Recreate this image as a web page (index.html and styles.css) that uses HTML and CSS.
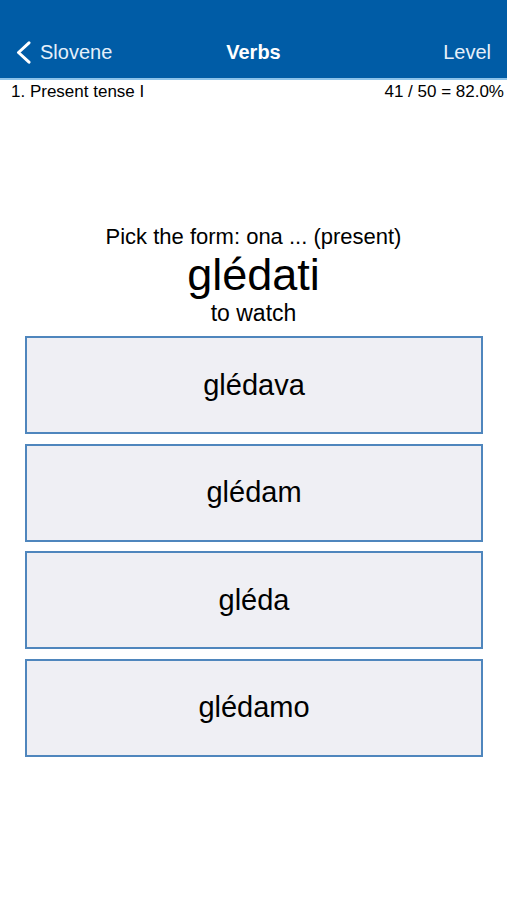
FILE: index.html
```html
<!DOCTYPE html>
<html>
<head>
<meta charset="utf-8">
<link rel="stylesheet" href="styles.css">
</head>
<body>
<header class="nav">
  <div class="nav-row">
    <div class="back">
      <svg class="chev" width="15" height="23" viewBox="0 0 15 23"><path d="M13 1.8 L2.5 11.5 L13 21.2" fill="none" stroke="#fff" stroke-width="3" stroke-linecap="round" stroke-linejoin="round"/></svg>
      <span>Slovene</span>
    </div>
    <div class="title">Verbs</div>
    <div class="level">Level</div>
  </div>
</header>
<div class="sub">
  <span>1. Present tense I</span>
  <span>41 / 50 = 82.0%</span>
</div>
<main class="quiz">
  <div class="prompt">Pick the form: ona ... (present)</div>
  <div class="word">glédati</div>
  <div class="meaning">to watch</div>
  <div class="options">
    <div class="opt">glédava</div>
    <div class="opt">glédam</div>
    <div class="opt">gléda</div>
    <div class="opt">glédamo</div>
  </div>
</main>
</body>
</html>
```

FILE: styles.css
```css
* { box-sizing: border-box; }
html, body { margin: 0; padding: 0; background: #fff; }
body {
  font-family: "Liberation Sans", Arial, sans-serif;
  color: #000;
  width: 507px;
  height: 900px;
  overflow: hidden;
}
.nav {
  height: 80px;
  background: #005ca6;
  border-bottom: 2px solid #8cc3ea;
  padding-top: 32px;
}
.nav-row {
  height: 40px;
  display: flex;
  align-items: center;
  justify-content: space-between;
  position: relative;
  padding: 0 16px 0 16px;
  color: #fff;
  font-size: 20px;
}
.back { display: flex; align-items: center; gap: 9px; color: #e6f0fa; }
.chev { display: block; }
.title {
  position: absolute;
  left: 0; right: 0;
  text-align: center;
  font-weight: bold;
  pointer-events: none;
}
.level { color: #e6f0fa; }
.sub {
  display: flex;
  justify-content: space-between;
  padding: 1px 3px 0 11px;
  font-size: 17px;
  line-height: 21px;
}
.quiz {
  padding-top: 122px;
  display: flex;
  flex-direction: column;
  align-items: center;
}
.prompt { font-size: 22px; line-height: 26px; }
.word { font-size: 45px; line-height: 50px; }
.meaning { font-size: 23px; line-height: 26px; }
.options {
  margin-top: 10px;
  width: 458px;
  display: flex;
  flex-direction: column;
  gap: 9.5px;
  margin-left: 1px;
}
.opt {
  height: 98px;
  border: 2px solid #4f86bd;
  background: #efeff4;
  display: flex;
  align-items: center;
  justify-content: center;
  font-size: 29px;
}
```
